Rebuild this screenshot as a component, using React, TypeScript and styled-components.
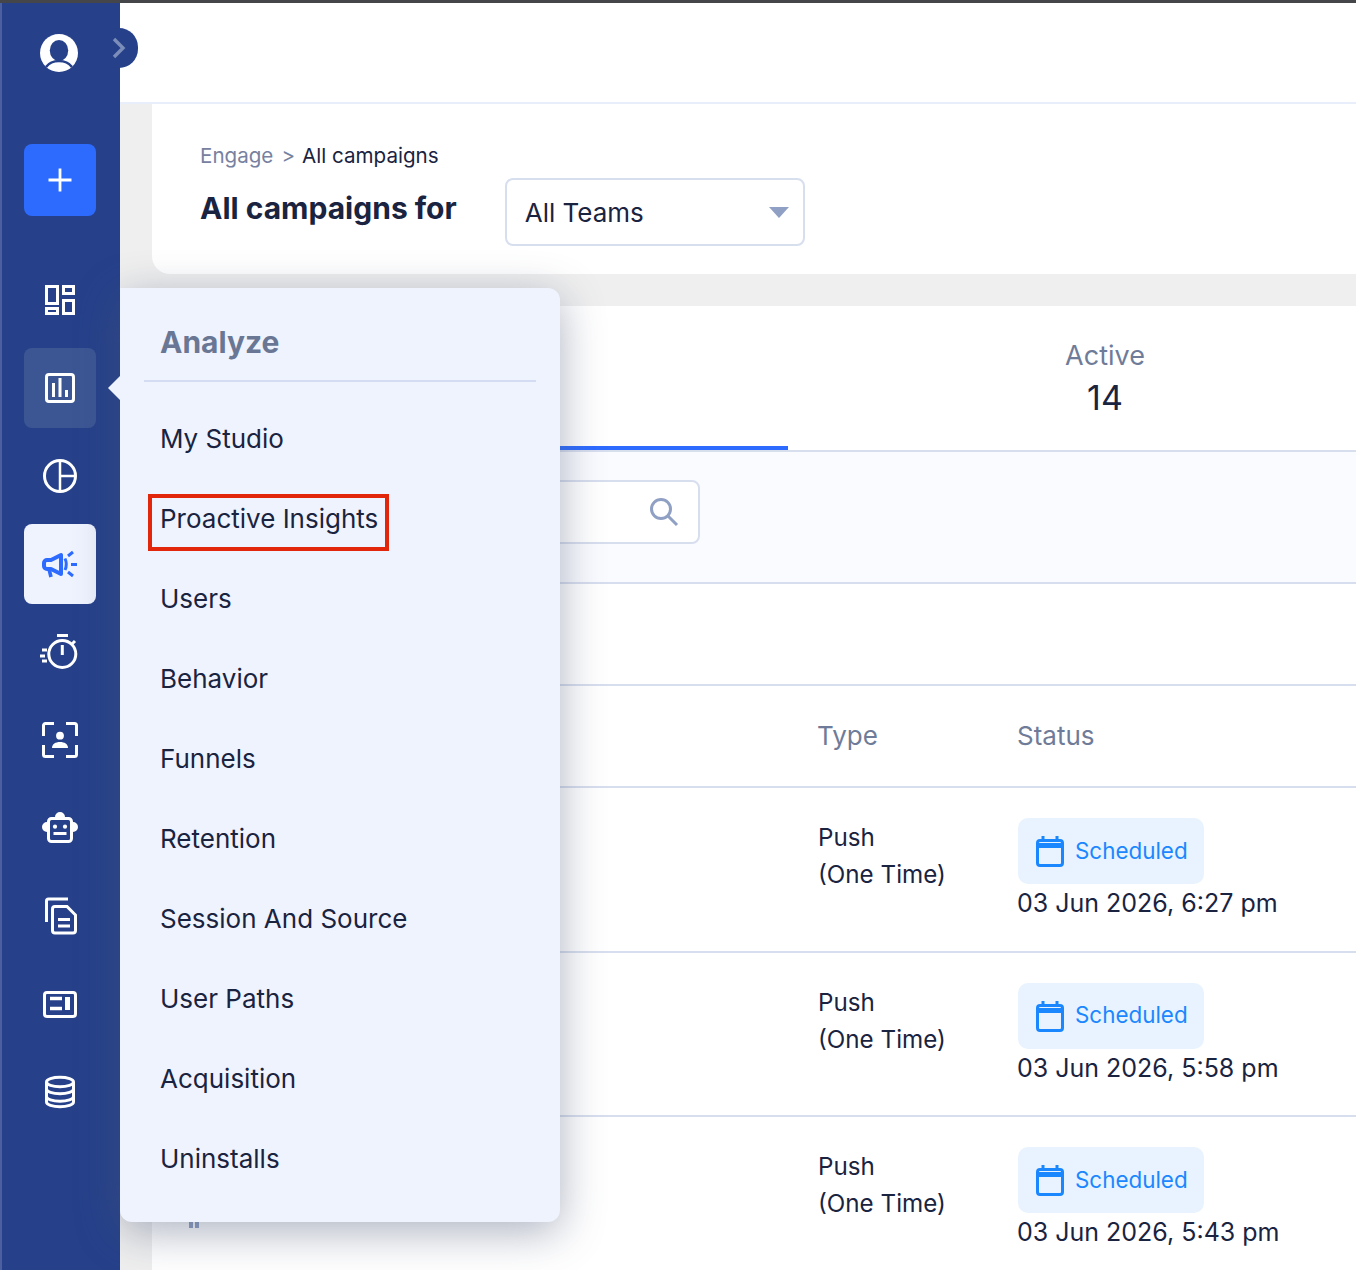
import styled, { createGlobalStyle } from "styled-components";
import type { ReactNode } from "react";

const GlobalStyle = createGlobalStyle`
  html, body {
    margin: 0;
    padding: 0;
    background: #ffffff;
  }
  body {
    font-family: Inter, "Liberation Sans", sans-serif;
    color: #1a2340;
    -webkit-font-smoothing: antialiased;
  }
`;

const NAV_ITEMS: { key: string; active?: boolean; hovered?: boolean; icon: ReactNode }[] = [
  {
    key: "dashboard",
    icon: (
      <>
        <rect x="6.5" y="6.5" width="11" height="17" />
        <rect x="23.5" y="6.5" width="10" height="7" />
        <rect x="6.5" y="28.5" width="11" height="5" />
        <rect x="23.5" y="20.5" width="10" height="13" />
      </>
    ),
  },
  {
    key: "analyze",
    hovered: true,
    icon: (
      <>
        <rect x="6.5" y="6.5" width="27" height="27" rx="2.5" />
        <path d="M13.5 15v14M20 10v19M26.5 22v7" />
      </>
    ),
  },
  {
    key: "segments",
    icon: (
      <>
        <circle cx="20" cy="20" r="15.5" />
        <path d="M20 4.5v31M20 20h15.5" strokeWidth="2.5" />
      </>
    ),
  },
  {
    key: "engage",
    active: true,
    icon: (
      <>
        <path d="M11 16l10-5v19l-10-5H7a3 3 0 0 1-3-3v-3a3 3 0 0 1 3-3z" strokeWidth="4" strokeLinejoin="round" />
        <path d="M9 25l2 8" strokeWidth="3.6" />
        <path d="M25 14.5c1.6 3.5 1.6 8 0 11.5M28 12l5-4M31 20.5h6M28 28l5 4" />
      </>
    ),
  },
  {
    key: "timer",
    icon: (
      <>
        <circle cx="22.3" cy="22" r="13.5" />
        <path d="M17 3.5h11M22.3 13v10M32 12l3-3" />
        <path d="M2 18h5M0 24h5M2 29h5" />
      </>
    ),
  },
  {
    key: "contacts",
    icon: (
      <>
        <path d="M3.5 16V5.5a2 2 0 0 1 2-2H14M26 3.5h8.5a2 2 0 0 1 2 2V16M36.5 25v9.5a2 2 0 0 1-2 2H26M14 36.5H5.5a2 2 0 0 1-2-2V25" />
        <circle cx="20" cy="15.7" r="3.9" fill="currentColor" stroke="none" />
        <path d="M12 28c0-4 3.5-6 8-6s8 2 8 6z" fill="currentColor" stroke="none" />
      </>
    ),
  },
  {
    key: "bots",
    icon: (
      <>
        <rect x="8.5" y="10.5" width="23" height="23" rx="3" />
        <path d="M15 9a5 5 0 0 1 10 0zM7 14a5 5 0 0 0 0 10zM33 14a5 5 0 0 1 0 10z" fill="currentColor" stroke="none" />
        <circle cx="15" cy="18.7" r="2.1" fill="currentColor" stroke="none" />
        <circle cx="25" cy="18.7" r="2.1" fill="currentColor" stroke="none" />
        <path d="M13.5 25.5h13" />
      </>
    ),
  },
  {
    key: "content",
    icon: (
      <>
        <path d="M6.5 26V5a2 2 0 0 1 2-2H28" />
        <path d="M15 10.5h12l8.5 8.5v15.5a2.5 2.5 0 0 1-2.5 2.5H15a2.5 2.5 0 0 1-2.5-2.5V13a2.5 2.5 0 0 1 2.5-2.5z" />
        <path d="M18 23.5h12M18 30h12" />
      </>
    ),
  },
  {
    key: "templates",
    icon: (
      <>
        <rect x="4.5" y="8.5" width="31" height="24" rx="2.5" />
        <path d="M10 14.5h12M10 24.5h12" strokeWidth="3.5" />
        <path d="M27.5 13v13" strokeWidth="5" />
      </>
    ),
  },
  {
    key: "data",
    icon: (
      <>
        <ellipse cx="20" cy="10" rx="13.5" ry="4.75" />
        <path d="M6.5 10v20c0 2.6 6.1 4.75 13.5 4.75S33.5 32.6 33.5 30V10" />
        <path d="M6.5 17c0 2.6 6.1 4.75 13.5 4.75S33.5 19.6 33.5 17M6.5 24.5c0 2.6 6.1 4.75 13.5 4.75s13.5-2.15 13.5-4.75" />
      </>
    ),
  },
];

const MENU_ITEMS = [
  "My Studio",
  "Proactive Insights",
  "Users",
  "Behavior",
  "Funnels",
  "Retention",
  "Session And Source",
  "User Paths",
  "Acquisition",
  "Uninstalls",
];

const CAMPAIGN_ROWS = [
  { date: "03 Jun 2026, 6:27 pm" },
  { date: "03 Jun 2026, 5:58 pm" },
  { date: "03 Jun 2026, 5:43 pm", clipped: true },
];

const App = () => {
  return (
    <Page>
      <GlobalStyle />
      <TopStrip />
      <Body>
        <Sidebar>
          <Avatar viewBox="0 0 38 38">
            <circle cx="19" cy="19" r="19" fill="#ffffff" />
            <ellipse cx="19" cy="16.5" rx="9.2" ry="10.5" fill="#26418a" />
            <path d="M6 33c3-4 8-6 13-6s10 2 13 6" fill="none" stroke="#26418a" strokeWidth="2.6" />
          </Avatar>
          <Toggle>
            <svg width="14" height="22" viewBox="0 0 14 22" fill="none" stroke="#7b8db8" strokeWidth="3.4">
              <path d="M2 2l9 9-9 9" />
            </svg>
          </Toggle>
          <CreateButton>
            <svg width="26" height="26" viewBox="0 0 26 26" fill="none" stroke="#ffffff" strokeWidth="2.8">
              <path d="M13 1.5v23M1.5 13h23" />
            </svg>
          </CreateButton>
          <NavList>
            {NAV_ITEMS.map((item) => (
              <NavItem key={item.key} $active={item.active} $hovered={item.hovered}>
                <NavIcon viewBox="0 0 40 40">{item.icon}</NavIcon>
              </NavItem>
            ))}
          </NavList>
        </Sidebar>
        <Main>
          <TopBar />
          <HeadCard>
            <Breadcrumb>
              <Crumb>Engage</Crumb>
              <Crumb>&gt;</Crumb>
              <CrumbCurrent>All campaigns</CrumbCurrent>
            </Breadcrumb>
            <TitleRow>
              <Title>All campaigns for</Title>
              <TeamSelect>
                All Teams
                <Caret />
              </TeamSelect>
            </TitleRow>
          </HeadCard>
          <Panel>
            <Tabs>
              <Tab $selected />
              <Tab>
                <TabLabel>Active</TabLabel>
                <TabCount>14</TabCount>
              </Tab>
            </Tabs>
            <FilterBar>
              <SearchBox>
                <svg width="30" height="30" viewBox="0 0 30 30" fill="none" stroke="#8fa0c4" strokeWidth="3">
                  <circle cx="12" cy="12" r="9.5" />
                  <path d="M19 19l9 9" />
                </svg>
              </SearchBox>
            </FilterBar>
            <ToolRow />
            <TableHead>
              <span />
              <HeadCell>Type</HeadCell>
              <HeadCell>Status</HeadCell>
            </TableHead>
            {CAMPAIGN_ROWS.map((row) => (
              <TableRow key={row.date}>
                <NameCell>{row.clipped && <ClippedMark />}</NameCell>
                <TypeCell>
                  Push
                  <br />
                  (One Time)
                </TypeCell>
                <div>
                  <StatusBadge>
                    <svg width="28" height="32" viewBox="0 0 28 32" fill="none" stroke="#1a87ff" strokeWidth="3">
                      <rect x="1.5" y="5.5" width="25" height="25" rx="2.5" />
                      <path d="M1.5 10.5h25" strokeWidth="5" />
                      <path d="M7 1v5M21 1v5" />
                    </svg>
                    <BadgeText>Scheduled</BadgeText>
                  </StatusBadge>
                  <StatusDate>{row.date}</StatusDate>
                </div>
              </TableRow>
            ))}
          </Panel>
        </Main>
      </Body>
      <FlyoutMenu>
        <MenuCaret />
        <MenuTitle>Analyze</MenuTitle>
        <MenuDivider />
        {MENU_ITEMS.map((label) => (
          <MenuItem key={label}>
            <MenuLabel $marked={label === "Proactive Insights"}>{label}</MenuLabel>
          </MenuItem>
        ))}
      </FlyoutMenu>
    </Page>
  );
};

const Page = styled.div`
  position: relative;
  width: 100%;
  height: 1270px;
  overflow: hidden;
  display: flex;
  flex-direction: column;
`;

const TopStrip = styled.div`
  height: 3px;
  flex: none;
  background: #45464a;
`;

const Body = styled.div`
  flex: 1;
  display: flex;
  min-height: 0;
`;

const Sidebar = styled.nav`
  position: relative;
  flex: none;
  width: 120px;
  box-sizing: border-box;
  padding-top: 31px;
  background: #26418a;
  box-shadow: inset 2px 0 0 #4c5f9e;
  display: flex;
  flex-direction: column;
  align-items: center;
`;

const Avatar = styled.svg`
  width: 38px;
  height: 38px;
  margin-left: -2px;
`;

const Toggle = styled.div`
  position: absolute;
  top: 25px;
  left: 100px;
  width: 38px;
  height: 40px;
  border-radius: 20px;
  background: #26418a;
  display: flex;
  align-items: center;
  padding-left: 12px;
  box-sizing: border-box;
`;

const CreateButton = styled.div`
  width: 72px;
  height: 72px;
  margin-top: 72px;
  border-radius: 8px;
  background: #2d6bff;
  display: flex;
  align-items: center;
  justify-content: center;
`;

const NavList = styled.div`
  margin-top: 44px;
  display: flex;
  flex-direction: column;
  gap: 8px;
`;

const NavItem = styled.div<{ $active?: boolean; $hovered?: boolean }>`
  width: 72px;
  height: 80px;
  border-radius: 8px;
  display: flex;
  align-items: center;
  justify-content: center;
  color: ${(props) => (props.$active ? "#2d6bff" : "#ffffff")};
  background: ${(props) => (props.$active ? "#eff3fe" : props.$hovered ? "#3c5694" : "transparent")};
`;

const NavIcon = styled.svg`
  width: 40px;
  height: 40px;
  fill: none;
  stroke: currentColor;
  stroke-width: 3;
`;

const Main = styled.main`
  flex: 1;
  min-width: 0;
  background: #efefef;
  display: flex;
  flex-direction: column;
`;

const TopBar = styled.div`
  flex: none;
  height: 99px;
  background: #ffffff;
  border-bottom: 2px solid #e8effa;
`;

const HeadCard = styled.section`
  flex: none;
  height: 170px;
  margin-left: 32px;
  margin-bottom: 32px;
  box-sizing: border-box;
  padding: 36px 0 0 48px;
  background: #ffffff;
  border-bottom-left-radius: 18px;
`;

const Breadcrumb = styled.div`
  display: flex;
  align-items: center;
  gap: 8px;
  height: 30px;
  font-size: 20.6px;
`;

const Crumb = styled.span`
  color: #77819f;
`;

const CrumbCurrent = styled.span`
  margin-left: -1px;
  color: #1a2340;
`;

const TitleRow = styled.div`
  display: flex;
  align-items: center;
  gap: 48px;
  margin-top: 8px;
`;

const Title = styled.h1`
  margin: 0 0 8px;
  font-size: 30px;
  font-weight: 700;
  line-height: 44px;
  color: #1a2340;
`;

const TeamSelect = styled.div`
  position: relative;
  width: 300px;
  height: 68px;
  box-sizing: border-box;
  padding-left: 18px;
  display: flex;
  align-items: center;
  font-size: 26px;
  background: #ffffff;
  border: 2px solid #d7deee;
  border-radius: 8px;
`;

const Caret = styled.span`
  position: absolute;
  right: 14px;
  top: 27px;
  border-left: 10px solid transparent;
  border-right: 10px solid transparent;
  border-top: 11px solid #8fa0c4;
`;

const Panel = styled.section`
  flex: 1;
  margin-left: 32px;
  background: #ffffff;
`;

const Tabs = styled.div`
  display: flex;
  height: 146px;
  box-sizing: border-box;
  border-bottom: 2px solid #d7deee;
`;

const Tab = styled.div<{ $selected?: boolean }>`
  flex: none;
  width: ${(props) => (props.$selected ? "636px" : "634px")};
  height: 144px;
  box-sizing: border-box;
  display: flex;
  flex-direction: column;
  align-items: center;
  padding-top: 33px;
  border-bottom: ${(props) => (props.$selected ? "4px solid #2d6bff" : "none")};
`;

const TabLabel = styled.div`
  font-size: 27px;
  line-height: 34px;
  color: #6f7c99;
`;

const TabCount = styled.div`
  font-size: 34px;
  line-height: 50px;
  color: #1a2340;
`;

const FilterBar = styled.div`
  height: 132px;
  box-sizing: border-box;
  padding: 28px 0 0 48px;
  background: #fafbff;
  border-bottom: 2px solid #d7deee;
`;

const SearchBox = styled.div`
  width: 500px;
  height: 64px;
  box-sizing: border-box;
  padding-right: 19px;
  display: flex;
  align-items: center;
  justify-content: flex-end;
  background: #ffffff;
  border: 2px solid #d7deee;
  border-radius: 8px;
`;

const ToolRow = styled.div`
  height: 102px;
  box-sizing: border-box;
  border-bottom: 2px solid #d7deee;
`;

const TableHead = styled.div`
  height: 102px;
  box-sizing: border-box;
  padding-bottom: 2px;
  display: grid;
  grid-template-columns: 665px 200px 1fr;
  align-items: center;
  border-bottom: 2px solid #d7deee;
`;

const HeadCell = styled.div`
  font-size: 26px;
  color: #6f7c99;
`;

const TableRow = styled.div`
  height: 164.5px;
  box-sizing: border-box;
  padding-top: 30px;
  display: grid;
  grid-template-columns: 665px 200px 1fr;
  align-items: start;
  border-bottom: 2px solid #d7deee;
`;

const NameCell = styled.div`
  padding-left: 37px;
`;

const ClippedMark = styled.div`
  width: 10px;
  height: 6px;
  margin-top: 75px;
  background: linear-gradient(90deg, #8fa0c4 0 4px, transparent 4px 6px, #8fa0c4 6px);
`;

const TypeCell = styled.div`
  padding: 1px 0 0 1px;
  font-size: 24.2px;
  line-height: 37px;
  color: #1a2340;
`;

const StatusBadge = styled.div`
  width: 186px;
  height: 66px;
  margin-left: 1px;
  box-sizing: border-box;
  padding-left: 18px;
  display: flex;
  align-items: center;
  gap: 11px;
  color: #1a87ff;
  background: #e8f3ff;
  border-radius: 10px;
`;

const BadgeText = styled.span`
  margin-bottom: 2px;
  font-size: 22.4px;
`;

const StatusDate = styled.div`
  font-size: 25px;
  line-height: 38px;
  color: #1a2340;
`;

const FlyoutMenu = styled.aside`
  position: absolute;
  top: 288px;
  left: 120px;
  width: 440px;
  height: 934px;
  background: #eff3fe;
  border-radius: 0 12px 12px 12px;
  box-shadow: 0 10px 44px rgba(70, 85, 115, 0.45);
`;

const MenuCaret = styled.div`
  position: absolute;
  top: 88px;
  left: -12px;
  border-top: 12px solid transparent;
  border-bottom: 12px solid transparent;
  border-right: 12px solid #eff3fe;
`;

const MenuTitle = styled.div`
  padding: 32px 0 0 40px;
  height: 92px;
  box-sizing: border-box;
  font-size: 30px;
  line-height: 44px;
  font-weight: 700;
  color: #6a7794;
`;

const MenuDivider = styled.div`
  height: 2px;
  margin: 0 24px 17px;
  background: #d3dcf2;
`;

const MenuItem = styled.div`
  height: 80px;
  box-sizing: border-box;
  padding: 0 0 2px 40px;
  display: flex;
  align-items: center;
`;

const MenuLabel = styled.span<{ $marked?: boolean }>`
  position: relative;
  font-size: 26px;
  color: #1a2340;

  ${(props) =>
    props.$marked &&
    `
    &::after {
      content: "";
      position: absolute;
      top: -9px;
      right: -11px;
      bottom: -17px;
      left: -12px;
      border: 4px solid #e2260c;
    }
  `}
`;

export default App;
